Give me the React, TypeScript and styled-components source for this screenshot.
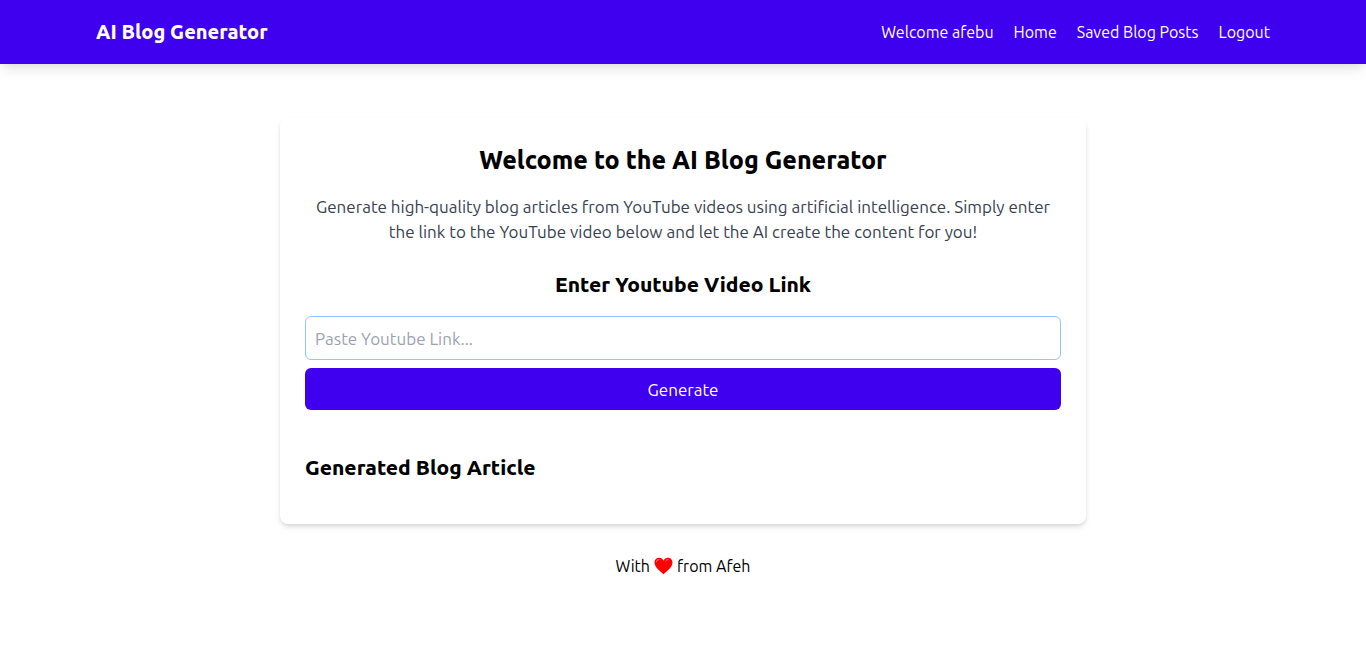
import React from "react";
import styled, { createGlobalStyle } from "styled-components";

const GlobalStyle = createGlobalStyle`
  *, *::before, *::after { box-sizing: border-box; }
  body {
    margin: 0;
    background: #fff;
    color: #000;
    font-family: Ubuntu, "Noto Sans", sans-serif;
    font-size: 16px;
    line-height: 24px;
  }
  h1, h2, h3, p { margin: 0; }
`;

const Header = styled.header`
  display: flex;
  align-items: center;
  justify-content: space-between;
  min-height: 64px;
  padding: 0 96px;
  background: #4000f0;
  color: #fff;
  box-shadow: 0 8px 12px -3px rgba(0, 0, 0, 0.1), 0 4px 6px -2px rgba(0, 0, 0, 0.04);
`;

const Brand = styled.h1`
  font-size: 20px;
  line-height: 28px;
  font-weight: 800;
`;

const Nav = styled.nav`
  display: flex;
  gap: 20px;
`;

const NavLink = styled.a`
  color: inherit;
  text-decoration: none;
`;

const Main = styled.main`
  display: flex;
  flex-direction: column;
  align-items: center;
  gap: 30px;
  padding: 54px 24px;
`;

const Card = styled.section`
  width: 100%;
  max-width: 806px;
  padding: 25px;
  border-radius: 8px;
  background: #fff;
  box-shadow: 0 4px 6px -1px rgba(0, 0, 0, 0.1), 0 2px 4px -1px rgba(0, 0, 0, 0.1);
`;

const Intro = styled.div`
  display: flex;
  flex-direction: column;
  gap: 17px;
  margin-bottom: 25px;
  text-align: center;
`;

const Title = styled.h2`
  font-size: 25px;
  line-height: 34px;
  font-weight: 800;
`;

const Lead = styled.p`
  color: #374151;
  font-size: 17px;
  line-height: 25px;
`;

const Form = styled.form`
  display: flex;
  flex-direction: column;
  gap: 8px;
  margin-bottom: 42px;
`;

const Subtitle = styled.h3<{ $centered?: boolean }>`
  margin-bottom: ${(p) => (p.$centered ? 9 : 17)}px;
  font-size: 21px;
  line-height: 30px;
  font-weight: 800;
  text-align: ${(p) => (p.$centered ? "center" : "left")};
`;

const LinkInput = styled.input`
  width: 100%;
  height: 44px;
  padding: 0 9px;
  border: 1px solid #93c5fd;
  border-radius: 6px;
  background: #fff;
  color: #000;
  font: inherit;
  font-size: 17px;
  outline: none;
  &::placeholder { color: #9ca3af; opacity: 1; }
`;

const GenerateButton = styled.button`
  width: 100%;
  height: 42px;
  border: 0;
  border-radius: 6px;
  background: #4000f0;
  color: #fff;
  font: inherit;
  font-size: 17px;
  line-height: 25px;
  cursor: pointer;
`;

const Footer = styled.footer`
  display: flex;
  align-items: center;
  gap: 4px;
`;

const Heart = () => (
  <svg width="19" height="20" viewBox="0 0 19 20" role="img" aria-label="love">
    <path
      d="M9.500 18.500C8.200 16.200.5 12.400.5 6.600.5 3.700 2.600 1.800 5.100 1.800c2 0 3.600 1.200 4.400 3 .8-1.800 2.400-3 4.400-3 2.500 0 4.600 1.900 4.600 4.800 0 5.800-7.700 9.600-9 11.900z"
      fill="#ff0000"
    />
    <path d="M2.500 5.600c.3-1.300 1.300-2 2.500-2" stroke="#ff5a5a" strokeWidth="1.200" strokeLinecap="round" fill="none" />
    <path d="M11.800 5.200c.4-1 1.200-1.600 2.200-1.600" stroke="#ff5a5a" strokeWidth="1.200" strokeLinecap="round" fill="none" />
  </svg>
);

export default function App() {
  return (
    <>
      <GlobalStyle />
      <Header>
        <Brand>AI Blog Generator</Brand>
        <Nav>
          <NavLink href="#">Welcome afebu</NavLink>
          <NavLink href="#">Home</NavLink>
          <NavLink href="#">Saved Blog Posts</NavLink>
          <NavLink href="#">Logout</NavLink>
        </Nav>
      </Header>
      <Main>
        <Card>
          <Intro>
            <Title>Welcome to the AI Blog Generator</Title>
            <Lead>
              Generate high-quality blog articles from YouTube videos using artificial
              intelligence. Simply enter the link to the YouTube video below and let the AI
              create the content for you!
            </Lead>
          </Intro>
          <Form onSubmit={(e) => e.preventDefault()}>
            <Subtitle $centered>
              <label htmlFor="youtube-link">Enter Youtube Video Link</label>
            </Subtitle>
            <LinkInput id="youtube-link" type="text" placeholder="Paste Youtube Link..." />
            <GenerateButton type="submit">Generate</GenerateButton>
          </Form>
          <Subtitle>Generated Blog Article</Subtitle>
        </Card>
        <Footer>
          <span>With</span>
          <Heart />
          <span>from Afeh</span>
        </Footer>
      </Main>
    </>
  );
}
